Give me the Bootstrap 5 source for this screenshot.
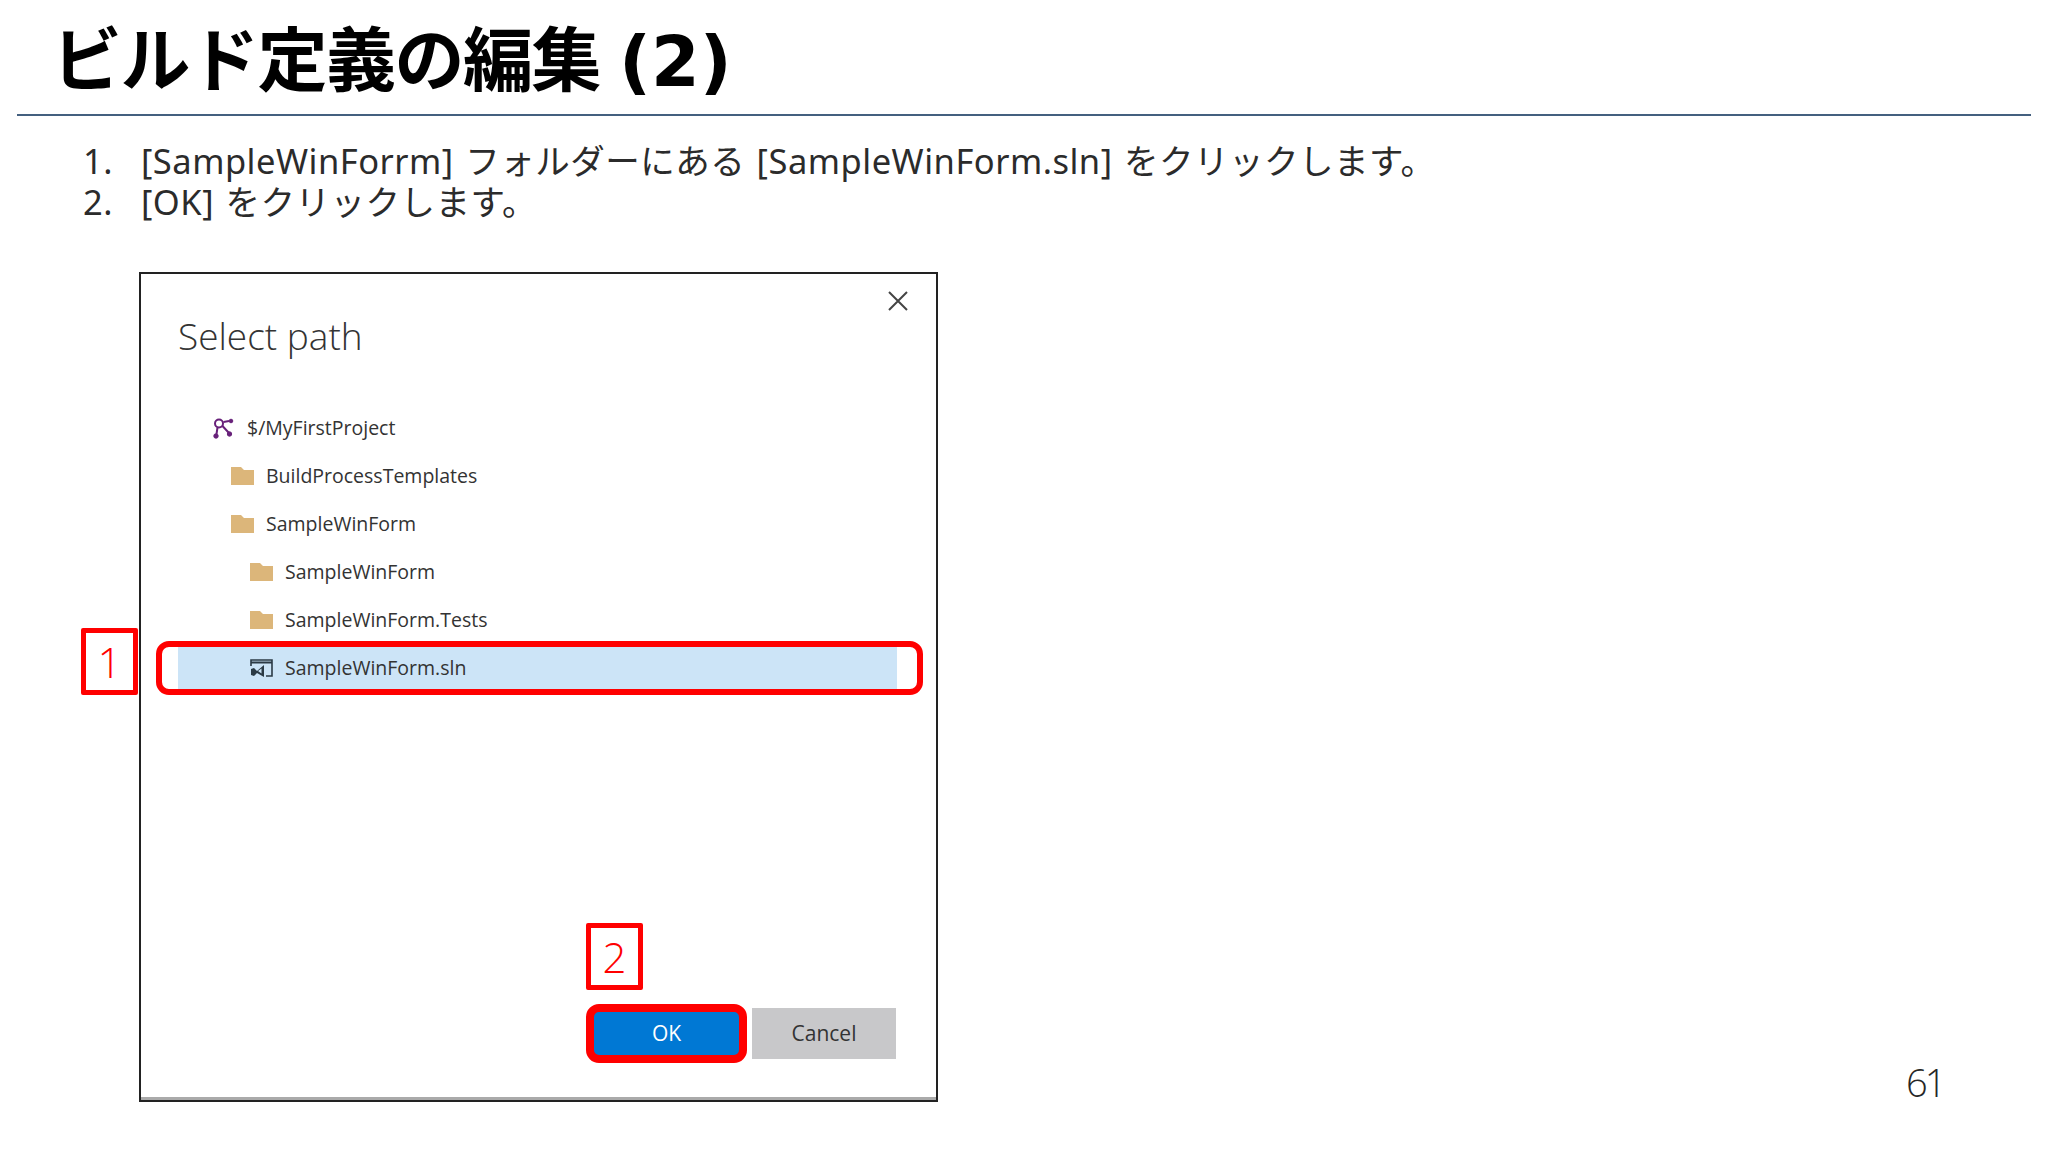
<!DOCTYPE html>
<html lang="ja">
<head>
  <meta charset="UTF-8">
  <title>ビルド定義の編集 (2)</title>
  <link href="https://cdn.jsdelivr.net/npm/bootstrap@5.3.0/dist/css/bootstrap.min.css" rel="stylesheet">
  <style>
    body {
      background: #fff;
      font-family: "Noto Sans", "Noto Sans CJK JP", sans-serif;
      color: #262626;
    }
    .slide {
      width: 2048px;
      height: 1152px;
      overflow: hidden;
      position: relative;
      padding: 0 17px;
    }
    .slide-title {
      font-family: "Liberation Sans", "Noto Sans CJK JP", sans-serif;
      font-weight: 700;
      font-size: 70px;
      line-height: 88px;
      letter-spacing: -1.5px;
      color: #000;
      margin: 18px 0 0 35px;
      height: 88px;
    }
    .title-paren {
      font-family: "DejaVu Sans", sans-serif;
      font-size: 70px;
      line-height: 1;
      letter-spacing: 0;
      margin-left: 1px;
    }
    .slide-rule {
      height: 2px;
      background: #44607f;
      margin: 8px 0 0 0;
    }
    .steps {
      font-size: 34.5px;
      line-height: 41px;
      letter-spacing: .5px;
      word-spacing: 2px;
      margin: 24px 0 0 66px;
      color: #2b2b2b;
    }
    .step-no { width: 58px; }
    .dialog-box {
      position: relative;
      width: 799px;
      height: 830px;
      margin: 50px 0 0 122px;
      border: 2px solid #222;
      box-shadow: inset 0 -3px 0 #aaa;
      background: #fff;
      padding: 36px 0 0 37px;
      font-family: "Open Sans", "Noto Sans", sans-serif;
    }
    .dialog-title {
      font-size: 37px;
      font-weight: 300;
      line-height: 52px;
      color: #333;
      margin: 0;
    }
    .close-x {
      position: absolute;
      top: 17px;
      right: 28px;
    }
    .tree { margin: 42px 0 0 0; width: 719px; }
    .tree-row {
      height: 48px;
      font-size: 19.5px;
      color: #333;
      gap: 12px;
    }
    .tree-row.depth-0 { padding-left: 35px; gap: 13px; }
    .tree-row.depth-1 { padding-left: 53px; }
    .tree-row.depth-2 { padding-left: 72px; }
    .tree-row.picked { position: relative; }
    .tree-row.picked::before {
      content: "";
      position: absolute;
      left: 0; right: 0; top: 2px; bottom: 2px;
      background: #cce4f7;
      z-index: 0;
    }
    .tree-row > * { position: relative; z-index: 1; }
    .dlg-btns {
      position: absolute;
      right: 40px;
      bottom: 41px;
      gap: 11px;
    }
    .dlg-btn {
      border: 0;
      border-radius: 0;
      font-size: 21px;
      padding: 0;
      height: 51px;
      width: 144px;
    }
    .dlg-ok { background: #0078d4; color: #fff; width: 149px; }
    .dlg-ok:hover { background: #0078d4; color: #fff; }
    .dlg-cancel { background: #c8c8ca; color: #333; }
    .note-box {
      position: absolute;
      border: 5px solid #f00;
      border-radius: 2px;
      background: #fff;
      color: #f00;
      font-size: 42px;
      font-weight: 300;
      font-family: "Open Sans", sans-serif;
      width: 57px;
      height: 67px;
    }
    .red-frame {
      position: absolute;
      border: 6px solid #f00;
      border-radius: 13px;
    }
    .red-frame.thick { border-width: 8px; }
    .page-no {
      position: absolute;
      left: 1906px;
      top: 1059px;
      font-size: 38px;
      font-weight: 300;
      line-height: 46px;
      letter-spacing: -3px;
      color: #262626;
      font-family: "Open Sans", sans-serif;
    }
  </style>
</head>
<body class="m-0">
  <div class="slide">
    <h1 class="slide-title">ビルド定義の編集 <span class="title-paren">(2)</span></h1>
    <div class="slide-rule"></div>
    <ol class="steps list-unstyled">
      <li class="d-flex"><span class="step-no">1.</span><span>[SampleWinForrm] フォルダーにある [SampleWinForm.sln] をクリックします。</span></li>
      <li class="d-flex"><span class="step-no">2.</span><span>[OK] をクリックします。</span></li>
    </ol>

    <div class="dialog-box">
      <svg class="close-x" width="20" height="20" viewBox="0 0 20 20"><path d="M1 1 19 19M19 1 1 19" stroke="#444" stroke-width="2" fill="none"/></svg>
      <h2 class="dialog-title">Select path</h2>
      <div class="tree">
        <div class="tree-row depth-0 d-flex align-items-center">
          <svg width="21" height="21" viewBox="0 0 21 21"><g fill="#68217a" stroke="#68217a"><path d="M9.5 8 16 15M10.5 4 16 3M4.5 9.5 3.5 16" stroke-width="2" fill="none"/><circle cx="6" cy="5.5" r="4" fill="none" stroke-width="2"/><circle cx="18" cy="3" r="1.8"/><circle cx="16.5" cy="16" r="2.2"/><circle cx="3" cy="18" r="2.2"/></g></svg>
          <span>$/MyFirstProject</span>
        </div>
        <div class="tree-row depth-1 d-flex align-items-center">
          <svg width="23" height="20" viewBox="0 0 23 20"><path d="M0 1h10l3 3h10v15H0z" fill="#dcb67a"/></svg>
          <span>BuildProcessTemplates</span>
        </div>
        <div class="tree-row depth-1 d-flex align-items-center">
          <svg width="23" height="20" viewBox="0 0 23 20"><path d="M0 1h10l3 3h10v15H0z" fill="#dcb67a"/></svg>
          <span>SampleWinForm</span>
        </div>
        <div class="tree-row depth-2 d-flex align-items-center">
          <svg width="23" height="20" viewBox="0 0 23 20"><path d="M0 1h10l3 3h10v15H0z" fill="#dcb67a"/></svg>
          <span>SampleWinForm</span>
        </div>
        <div class="tree-row depth-2 d-flex align-items-center">
          <svg width="23" height="20" viewBox="0 0 23 20"><path d="M0 1h10l3 3h10v15H0z" fill="#dcb67a"/></svg>
          <span>SampleWinForm.Tests</span>
        </div>
        <div class="tree-row picked depth-2 d-flex align-items-center">
          <svg width="23" height="20" viewBox="0 0 23 20"><path d="M1 8V2h21v16h-6" stroke="#2b3a45" stroke-width="1.6" fill="none"/><path d="M1 4.5h21" stroke="#2b3a45" stroke-width="2"/><path d="M1 11l3-1 3 3 7-6v12l-7-4-3 3-3-1z" fill="#2b3a45"/><path d="M11.5 10.5v5l-3.500-2.500z" fill="#cce4f7"/></svg>
          <span>SampleWinForm.sln</span>
        </div>
      </div>
      <div class="dlg-btns d-flex">
        <button type="button" class="btn dlg-btn dlg-ok">OK</button>
        <button type="button" class="btn dlg-btn dlg-cancel">Cancel</button>
      </div>
    </div>

    <div class="note-box d-flex align-items-center justify-content-center" style="left:81px;top:628px">1</div>
    <div class="red-frame" style="left:156px;top:641px;width:767px;height:54px"></div>
    <div class="note-box d-flex align-items-center justify-content-center" style="left:586px;top:923px">2</div>
    <div class="red-frame thick" style="left:586px;top:1004px;width:161px;height:59px"></div>
    <div class="page-no">61</div>
  </div>
  <script src="https://cdn.jsdelivr.net/npm/bootstrap@5.3.0/dist/js/bootstrap.bundle.min.js"></script>
</body>
</html>
